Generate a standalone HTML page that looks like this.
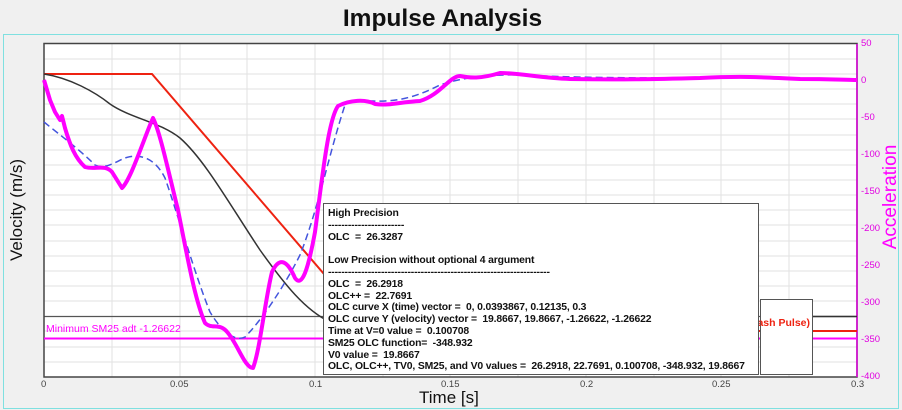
<!DOCTYPE html>
<html><head><meta charset="utf-8"><style>
html,body{margin:0;width:902px;height:410px;overflow:hidden}
body{background:#f0f0f0;font-family:"Liberation Sans",Arial,sans-serif;position:relative}
.t{position:absolute;white-space:nowrap}
#box{position:absolute;left:323px;top:203px;width:436px;height:172px;background:#fff;border:1px solid #555;box-sizing:border-box;font-size:10.4px;line-height:11.8px;color:#111;padding:4px 0 0 4px;font-weight:bold;letter-spacing:-0.15px;white-space:nowrap;overflow:hidden}
</style></head><body>
<div class="t" style="left:0;width:885px;text-align:center;top:5px;font-size:24.5px;font-weight:bold;color:#111">Impulse Analysis</div>
<svg width="902" height="410" style="position:absolute;left:0;top:0">
<rect x="3.5" y="34.5" width="895" height="374" fill="none" stroke="#7fe0e0"/>
<rect x="44" y="44" width="813" height="333" fill="#fff"/>
<g stroke="#e2e2e2" stroke-width="1">
<path d="M112 44V377M180 44V377M247 44V377M315 44V377M383 44V377M450 44V377M518 44V377M586 44V377M654 44V377M721 44V377M789 44V377"/>
<path d="M44 59H857M44 74H857M44 89H857M44 104H857M44 119H857M44 135H857M44 150H857M44 165H857M44 180H857M44 195H857M44 210H857M44 225H857M44 241H857M44 256H857M44 271H857M44 286H857M44 301H857M44 331H857M44 347H857M44 362H857"/>
</g>
<path d="M44 316.5H857" stroke="#555" stroke-width="1.2"/>
<rect x="44" y="43.5" width="813" height="333.5" fill="none" stroke="#444" stroke-width="1.5"/>
<path d="M857 44V377" stroke="#e000e0" stroke-width="1.5"/>
<path d="M44 338.5H857" stroke="#f0f" stroke-width="2"/>
<path d="M44 74H152L373 331H857" fill="none" stroke="#e21" stroke-width="2"/>
<path d="M44 74C70 78 95 92 110 104C130 118 160 122 180 138C205 160 230 205 260 250C285 285 305 310 330 322" fill="none" stroke="#333" stroke-width="1.5"/>
<path d="M44 122C60 135 80 150 95 165C105 170 115 162 125 158C140 153 155 158 165 178C178 215 195 275 210 312C222 332 235 342 245 337C262 320 285 285 300 255C318 210 330 150 345 105C355 98 370 102 385 101C405 100 420 95 440 85C460 78 490 74 520 75C600 79 700 78 760 77C800 78 830 79 857 80" fill="none" stroke="#4455dd" stroke-width="1.5" stroke-dasharray="7,4"/>
<path d="M44 80L50 100L55 112L60 120L62 116L65 128C70 145 75 158 85 167C95 170 105 164 112 172L122 188C130 180 140 150 150 125L153 118C160 132 168 170 178 210C188 260 195 300 205 323C212 330 220 322 228 333C238 345 245 368 253 368C260 350 265 300 272 272C280 255 288 262 295 278C302 288 308 270 315 232C322 180 328 120 338 106C350 100 365 99 375 104C390 106 400 102 420 101C440 95 450 76 460 76C470 78 480 79 500 73C520 73 540 78 570 79C620 80 660 79 700 78C740 76 760 77 800 79C830 79 845 80 857 80" fill="none" stroke="#f0f" stroke-width="4" stroke-linejoin="round"/>
<rect x="760.5" y="299.5" width="52" height="75" fill="#fff" stroke="#555"/>
<path d="M813 316.5H857" stroke="#333" stroke-width="1.5"/>
<path d="M813 331H857" stroke="#e21" stroke-width="2"/>
<text x="810" y="326" text-anchor="end" font-size="10.5" font-weight="bold" fill="#e21" font-family="Liberation Sans, Arial, sans-serif">ash Pulse)</text>
<text transform="translate(22,210) rotate(-90)" text-anchor="middle" font-size="17" fill="#111" font-family="Liberation Sans, Arial, sans-serif">Velocity (m/s)</text>
<text transform="translate(896,197) rotate(-90)" text-anchor="middle" font-size="19" fill="#f0f" font-family="Liberation Sans, Arial, sans-serif">Acceleration</text>
</svg>
<div class="t" style="left:46px;top:323px;font-size:10.5px;color:#f0f">Minimum SM25 adt -1.26622</div>
<div id="box">High Precision<br>-----------------------<br>OLC &nbsp;= &nbsp;26.3287<br><br>Low Precision without optional 4 argument<br>-------------------------------------------------------------------<br>OLC &nbsp;= &nbsp;26.2918<br>OLC++ = &nbsp;22.7691<br>OLC curve X (time) vector = &nbsp;0, 0.0393867, 0.12135, 0.3<br>OLC curve Y (velocity) vector = &nbsp;19.8667, 19.8667, -1.26622, -1.26622<br>Time at V=0 value = &nbsp;0.100708<br>SM25 OLC function= &nbsp;-348.932<br>V0 value = &nbsp;19.8667<br>OLC, OLC++, TV0, SM25, and V0 values = &nbsp;26.2918, 22.7691, 0.100708, -348.932, 19.8667</div>
<div style="position:absolute;left:0;top:0;font-size:9.5px;color:#444">
<div class="t" style="right:862px;top:38px">22.5</div>
<div class="t" style="right:862px;top:68px">20</div>
<div class="t" style="right:862px;top:98px">17.5</div>
<div class="t" style="right:862px;top:129px">15</div>
<div class="t" style="right:862px;top:159px">12.5</div>
<div class="t" style="right:862px;top:189px">10</div>
<div class="t" style="right:862px;top:219px">7.5</div>
<div class="t" style="right:862px;top:250px">5</div>
<div class="t" style="right:862px;top:280px">2.5</div>
<div class="t" style="right:862px;top:310px">0</div>
<div class="t" style="right:862px;top:340px">-2.5</div>
<div class="t" style="right:862px;top:371px">-5</div>
<div class="t" style="left:41px;top:379px">0</div>
<div class="t" style="left:170px;top:379px">0.05</div>
<div class="t" style="left:309px;top:379px">0.1</div>
<div class="t" style="left:441px;top:379px">0.15</div>
<div class="t" style="left:580px;top:379px">0.2</div>
<div class="t" style="left:712px;top:379px">0.25</div>
<div class="t" style="left:851px;top:379px">0.3</div>
</div>
<div style="position:absolute;left:0;top:0;font-size:9.5px;color:#e000e0">
<div class="t" style="left:861px;top:38px">50</div>
<div class="t" style="left:861px;top:75px">0</div>
<div class="t" style="left:861px;top:112px">-50</div>
<div class="t" style="left:861px;top:149px">-100</div>
<div class="t" style="left:861px;top:186px">-150</div>
<div class="t" style="left:861px;top:223px">-200</div>
<div class="t" style="left:861px;top:260px">-250</div>
<div class="t" style="left:861px;top:297px">-300</div>
<div class="t" style="left:861px;top:334px">-350</div>
<div class="t" style="left:861px;top:371px">-400</div>
</div>
<div class="t" style="left:419px;top:388px;font-size:17px;color:#111">Time [s]</div>
</body></html>
